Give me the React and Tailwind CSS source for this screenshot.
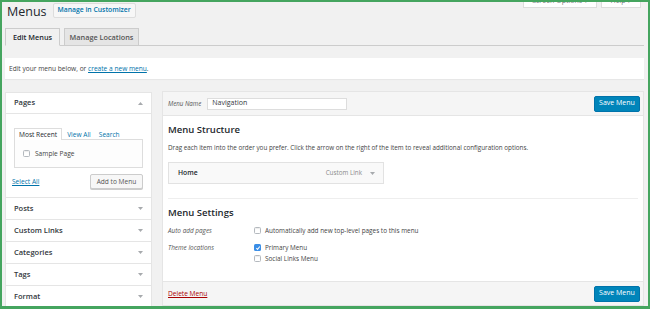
const Caret = ({ up = false }) => (
  <svg width="5" height="3" viewBox="0 0 5 3" className="shrink-0">
    <polygon points={up ? "0,3 5,3 2.5,0" : "0,0 5,0 2.5,3"} fill="#a7aaad" />
  </svg>
);

const Checkbox = ({ checked = false }) =>
  checked ? (
    <span className="flex h-[7px] w-[7px] shrink-0 items-center justify-center rounded-[1.5px] bg-[#3a8ee6]">
      <svg width="6" height="6" viewBox="0 0 8 8">
        <path d="M1.8 4.3 L3.4 5.9 L6.4 2" fill="none" stroke="#fff" strokeWidth="1.4" />
      </svg>
    </span>
  ) : (
    <span className="h-[7px] w-[7px] shrink-0 rounded-[1.5px] border border-[#b4b9be] bg-white shadow-[inset_0_1px_1px_rgba(0,0,0,0.08)]" />
  );

const SaveButton = () => (
  <button className="h-[16px] w-[46px] rounded-[2px] border border-[#0073aa] bg-[#0085ba] text-[7px] text-white">
    Save Menu
  </button>
);

const AccordionRow = ({ title }) => (
  <div className="flex h-[22px] items-center justify-between border-t border-[#e5e5e5] bg-white pl-[8px] pr-[8px]">
    <span className="text-[7.5px] font-semibold text-[#32373c]">{title}</span>
    <Caret />
  </div>
);

export default function App() {
  return (
    <div
      className="h-[309px] w-[650px] overflow-hidden border-2 border-b-[3px] border-[#45a55f] bg-[#f1f1f1] text-[#444]"
      style={{ fontFamily: '"Open Sans", "Liberation Sans", sans-serif' }}
    >
      <div className="pl-[4px] pr-[4px]">
        {/* title row */}
        <div className="flex h-[19px] items-start">
          <h1 className="ml-[1px] mt-[2px] text-[12.5px] leading-[16px] text-[#23282d]">Menus</h1>
          <button className="ml-[6px] mt-[1px] h-[15px] rounded-[2px] border border-[#ddd] bg-[#f7f7f7] px-[4px] text-[6.8px] font-semibold text-[#0073aa]">
            Manage in Customizer
          </button>
          <div className="flex-1" />
          <div className="-mt-[6px] flex h-[12px] w-[74px] items-center justify-center border border-t-0 border-[#ddd] bg-white text-[7px] leading-[8px] text-[#72777c]">
            <span className="-mt-[1px]">Screen Options ▾</span>
          </div>
          <div className="-mt-[6px] ml-[4px] mr-[3px] flex h-[12px] w-[40px] items-center justify-center border border-t-0 border-[#ddd] bg-white text-[7px] leading-[8px] text-[#72777c]">
            <span className="-mt-[1px]">Help ▾</span>
          </div>
        </div>

        {/* tabs */}
        <div className="mt-[7px] flex items-end gap-[4px] border-b border-[#ccc]">
          <div className="ml-[-1px] -mb-px flex h-[18px] w-[55px] items-center justify-center border border-[#ccc] border-b-[#f1f1f1] bg-[#f1f1f1] text-[7.3px] font-semibold text-[#23282d]">
            Edit Menus
          </div>
          <div className="flex h-[17px] w-[75px] items-center justify-center border border-b-0 border-[#ccc] bg-[#e5e5e5] text-[7.3px] font-semibold text-[#555]">
            Manage Locations
          </div>
        </div>

        {/* notice */}
        <div className="mt-[12px] ml-[-1px] flex h-[21px] items-center bg-white pl-[4px] text-[6.6px] text-[#444] shadow-[0_1px_1px_rgba(0,0,0,0.04)]">
          Edit your menu below, or&nbsp;
          <span className="text-[#0073aa] underline">create a new menu</span>.
        </div>

        {/* main */}
        <div className="mt-[13px] flex gap-[10px]">
          {/* left column */}
          <div className="ml-[-1px] w-[147px] border border-[#e5e5e5] border-t-0 bg-white">
            <div className="flex h-[22px] items-center justify-between border-y border-[#e5e5e5] pl-[8px] pr-[8px]">
              <span className="text-[7.5px] font-semibold text-[#32373c]">Pages</span>
              <Caret up />
            </div>
            <div className="px-[8px] pb-[8px] pt-[14px]">
              <div className="flex h-[12px] items-end text-[6.6px]">
                <span className="flex h-[12px] items-center border border-b-0 border-[#ddd] bg-white px-[4px] text-[#23282d]">
                  Most Recent
                </span>
                <span className="ml-[5px] text-[#0073aa]">View All</span>
                <span className="ml-[8px] text-[#0073aa]">Search</span>
              </div>
              <div className="-mt-px flex h-[29px] items-center gap-[5px] border border-[#ddd] bg-[#fdfdfd] pl-[8px] text-[6.6px] text-[#444]">
                <Checkbox />
                Sample Page
              </div>
              <div className="mt-[6px] flex items-center justify-between">
                <span className="ml-[-2px] text-[6.6px] text-[#0073aa] underline">Select All</span>
                <button className="h-[15px] w-[53px] rounded-[2px] border border-[#ccc] bg-[#f7f7f7] text-[6.6px] text-[#555] shadow-[0_1px_0_#ccc]">
                  Add to Menu
                </button>
              </div>
            </div>
            <AccordionRow title="Posts" />
            <AccordionRow title="Custom Links" />
            <AccordionRow title="Categories" />
            <AccordionRow title="Tags" />
            <AccordionRow title="Format" />
          </div>

          {/* right column */}
          <div className="-mt-px flex h-[215px] flex-1 flex-col border border-[#e5e5e5] bg-white">
            <div className="flex h-[24px] shrink-0 items-center border-b border-[#e5e5e5] bg-[#f5f5f5] pl-[5px] pr-[3px]">
              <span className="text-[6.2px] italic text-[#555]">Menu Name</span>
              <div className="ml-[6px] flex h-[12px] w-[140px] items-center border border-[#ddd] bg-white pl-[4px] text-[7px] text-[#32373c]">
                Navigation
              </div>
              <div className="flex-1" />
              <SaveButton />
            </div>

            <div className="flex-1 px-[5px]">
              <h3 className="mt-[8px] text-[9.5px] font-semibold leading-[12px] text-[#23282d]">Menu Structure</h3>
              <p className="mt-[7px] text-[6.3px] leading-[9px] text-[#444]">
                Drag each item into the order you prefer. Click the arrow on the right of the item to reveal additional configuration options.
              </p>
              <div className="mt-[10px] flex h-[22px] w-[216px] items-center border border-[#e2e2e2] bg-[#f9f9f9] pl-[9px] pr-[8px]">
                <span className="text-[6.8px] font-semibold text-[#23282d]">Home</span>
                <div className="flex-1" />
                <span className="mr-[8px] text-[6.3px] text-[#8a8a8a]">Custom Link</span>
                <Caret />
              </div>

              <div className="mt-[14px] border-t border-[#eee] pt-[8px]">
                <h3 className="text-[9.5px] font-semibold leading-[12px] text-[#23282d]">Menu Settings</h3>
                <div className="mt-[6px] flex text-[6.4px] leading-[11px]">
                  <span className="w-[86px] italic text-[#555]">Auto add pages</span>
                  <span className="flex items-center gap-[4px] text-[#444]">
                    <Checkbox />
                    Automatically add new top-level pages to this menu
                  </span>
                </div>
                <div className="mt-[6px] flex text-[6.4px] leading-[11px]">
                  <span className="w-[86px] italic text-[#555]">Theme locations</span>
                  <div className="flex flex-col">
                    <span className="flex items-center gap-[4px] text-[#444]">
                      <Checkbox checked />
                      Primary Menu
                    </span>
                    <span className="flex items-center gap-[4px] text-[#444]">
                      <Checkbox />
                      Social Links Menu
                    </span>
                  </div>
                </div>
              </div>
            </div>

            <div className="flex h-[24px] shrink-0 items-center justify-between border-t border-[#e5e5e5] bg-[#f5f5f5] pl-[5px] pr-[3px]">
              <span className="text-[6.6px] text-[#a00] underline">Delete Menu</span>
              <SaveButton />
            </div>
          </div>
        </div>
      </div>
    </div>
  );
}
